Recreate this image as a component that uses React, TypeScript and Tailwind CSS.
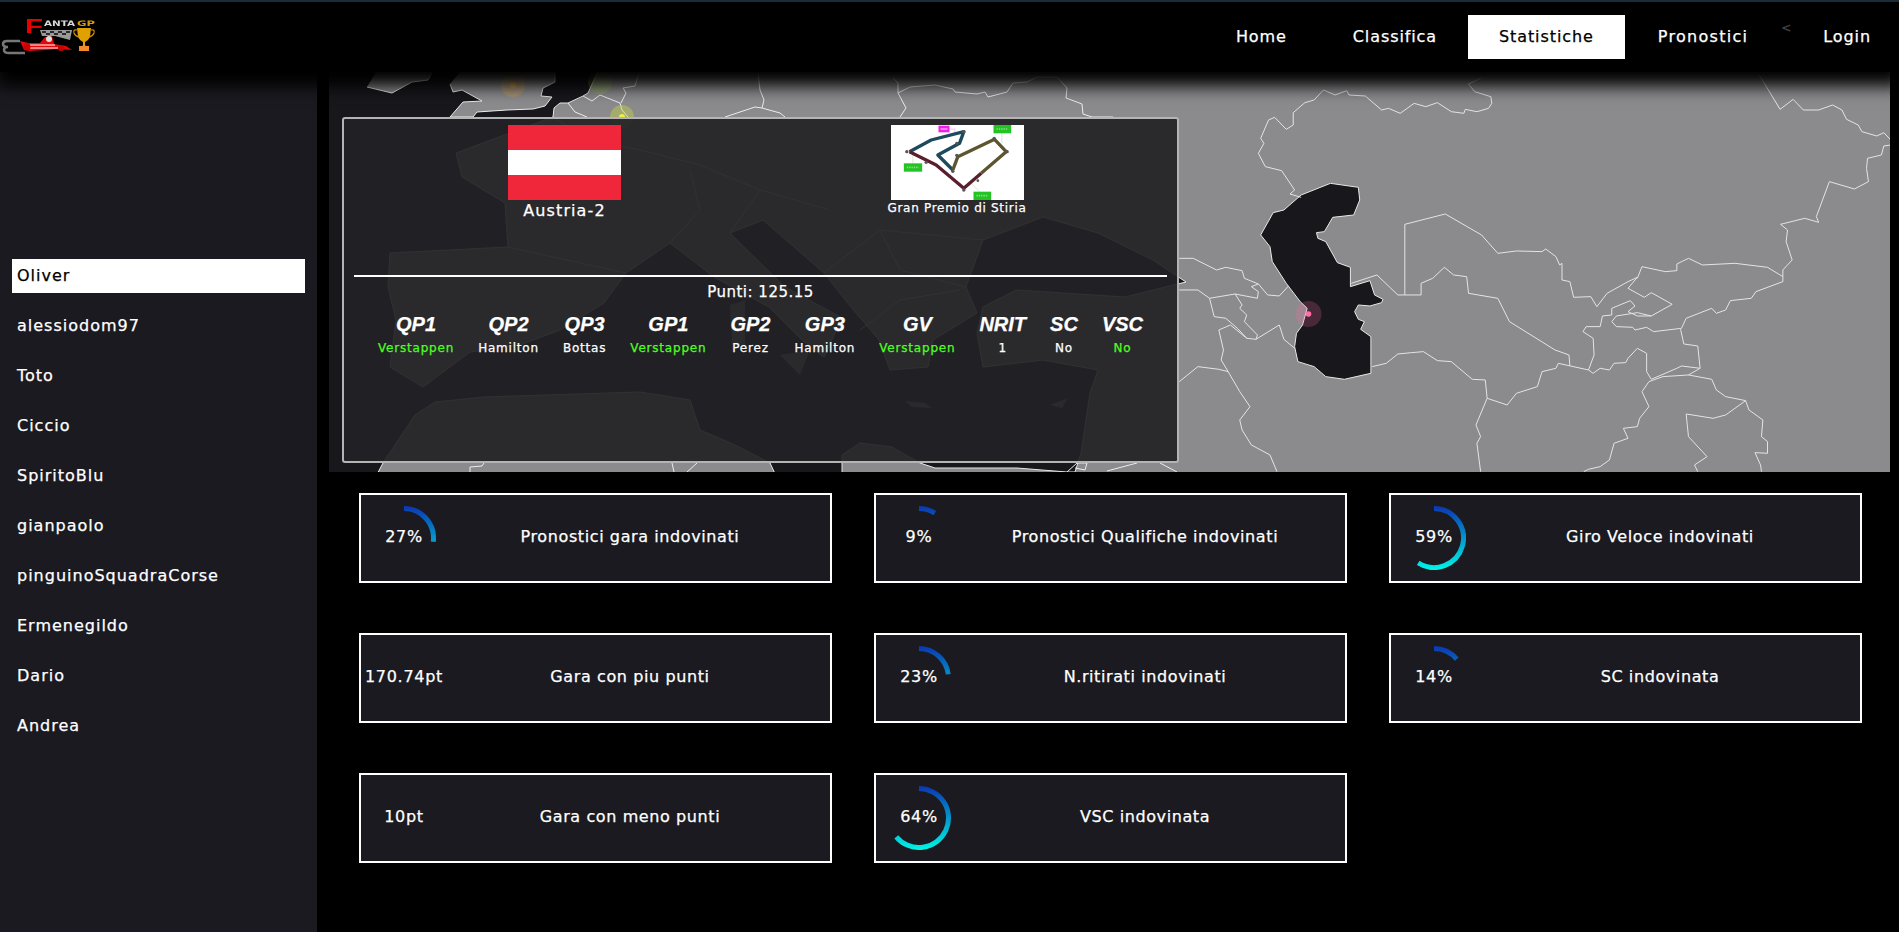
const FONT = "font-['DejaVu_Sans',sans-serif]";

const players = ["Oliver", "alessiodom97", "Toto", "Ciccio", "SpiritoBlu", "gianpaolo", "pinguinoSquadraCorse", "Ermenegildo", "Dario", "Andrea"];

const picks = [
  { t: "QP1", v: "Verstappen", ok: true },
  { t: "QP2", v: "Hamilton" },
  { t: "QP3", v: "Bottas" },
  { t: "GP1", v: "Verstappen", ok: true },
  { t: "GP2", v: "Perez" },
  { t: "GP3", v: "Hamilton" },
  { t: "GV", v: "Verstappen", ok: true },
  { t: "NRIT", v: "1" },
  { t: "SC", v: "No" },
  { t: "VSC", v: "No", ok: true },
];

const stats = [
  { value: "27%", pct: 27, label: "Pronostici gara indovinati" },
  { value: "9%", pct: 9, label: "Pronostici Qualifiche indovinati" },
  { value: "59%", pct: 59, label: "Giro Veloce indovinati" },
  { value: "170.74pt", label: "Gara con piu punti" },
  { value: "23%", pct: 23, label: "N.ritirati indovinati" },
  { value: "14%", pct: 14, label: "SC indovinata" },
  { value: "10pt", label: "Gara con meno punti" },
  { value: "64%", pct: 64, label: "VSC indovinata" },
];

// sea outline, in page coordinates (runs past the map edges so its stroke stays hidden)
const sea = "320,60 603,60 588,93 583,96 568,103 560,103 554,108 553,117 456,153 462,177 505,203 508,247 390,253 388,287 396,320 390,367 423,387 470,352 520,345 560,330 604,303 626,273 670,243 714,277 769,307 802,340 824,357 835,333 846,320 785,287 747,250 730,233 763,220 824,273 851,307 879,340 890,370 928,367 933,340 977,313 966,287 983,240 1043,217 1098,233 1153,260 1186,282 1125,297 1016,290 983,307 977,333 983,367 1043,360 1098,370 1090,393 1081,453 1075,472 1067,472 1017,468 935,468 920,463 892,447 860,443 842,455 842,480 778,480 770,463 735,445 700,430 690,400 640,392 484,397 435,402 415,415 383,463 374,480 320,480";

const caspian = "345,370 405,382 408,420 395,465 350,472 332,515 315,518 318,535 335,545 360,608 388,622 388,680 430,662 440,705 458,718 455,728 430,738 405,735 397,755 405,778 418,785 410,808 432,830 432,940 375,958 335,950 310,920 275,905 268,860 272,820 285,795 295,745 280,725 250,670 220,605 215,560 195,525 222,458 245,450 282,405";

// borders traced from the crop of central asia
const asiaBorders = [
  "642,72 668,55",
  "642,72 655,95 690,110 692,130 685,145 660,155 635,148 632,160 605,155 575,128 550,140 525,130 495,160 470,145 455,150 420,108 385,105 380,92 355,105 330,90 310,120 290,128 265,158 265,195 250,208 225,172 212,180 195,235 202,250 190,280 205,320 240,332 268,390 258,402 282,412",
  "1265,40 1312,148 1340,118 1362,150 1395,150 1425,135 1445,150 1455,178 1480,195 1488,215 1520,228 1535,218 1550,240",
  "1550,255 1535,258 1530,285 1500,295 1498,325 1502,365 1472,387 1418,365 1390,470 1395,487 1365,475 1313,493 1328,510 1325,545 1338,600 1318,630 1318,665",
  "1318,650 1285,622 1215,610 1145,615 1115,595 1090,612 1090,632 1065,635 1015,620 1005,655",
  "505,705 505,493 592,462 670,525 705,580 745,573 800,575 808,567 830,590 838,615 843,610 843,660 860,665 868,712 905,710 918,740 940,700 985,665 1005,652",
  "390,670 445,645 490,705 540,705",
  "540,705 540,670 565,655 590,622 610,645 638,650 642,700 705,715 730,785 828,870 858,885 860,918",
  "435,920 465,910 490,882 520,878 545,875 575,902 605,905 650,958 678,960 682,1015 725,1035 745,1000 790,980 800,935 830,925 835,910 900,930",
  "682,1015 658,1095 668,1130 660,1150 668,1235",
  "900,930 912,885 910,835 888,815 895,800 925,800 930,768 950,765 950,745 990,722 1000,738 985,755 1005,768 1035,768 1080,733 1035,698 1020,712 985,685 1005,652",
  "1035,768 1005,758 960,768 950,785 960,800 995,802 1000,810 1025,802 1040,815 1100,805 1110,775 1165,745 1175,760 1195,750 1205,722 1250,715 1260,695 1318,665",
  "1098,808 1105,852 1135,858 1140,925 1100,918 1090,925 1035,958 1025,935 1025,880 1005,865 985,895 980,908 955,910 945,930 925,925 910,940 900,930",
  "1140,925 1115,945 1060,950 1030,965 1015,995 1030,1040 1010,1075 1005,1100 975,1105 985,1135 955,1150 945,1200 925,1220 900,1228 890,1235",
  "1115,945 1165,958 1175,990 1195,1010 1238,1022 1245,1050 1275,1080 1272,1130 1285,1145 1285,1180 1258,1178 1270,1215 1272,1235",
  "1238,1022 1195,1065 1168,1075 1110,1062 1115,1130 1155,1190 1128,1215 1135,1235",
  "20,595 50,595 100,630 120,622 155,632 160,655 190,672 210,705 235,708 255,678",
  "20,690 60,690 85,715 140,702 188,715 190,695 175,680 190,672",
  "140,702 155,735 150,745 165,765 160,785 188,825 185,838 235,795 245,838 268,865",
  "85,715 95,770 120,775 145,805 165,835 185,838",
  "105,810 130,795 165,835",
  "105,810 115,870 110,900 125,935 150,995 172,1040 150,1080 155,1110 175,1155 215,1185 230,1235",
  "20,965 60,920 105,928 125,935",
];

// everything else is already in page coordinates
const pageBorders = [
  "367,87 392,93 412,82 428,80 432,73",
  "450,84 453,92 462,90 482,101 463,102 450,117 473,117 477,112 507,110 533,109 545,106 552,97 541,96 543,88 555,82 555,73",
  "568,103 575,112 587,117",
  "583,96 592,101 600,95 620,103 622,110 628,117",
  "621,103 626,93 623,88 635,86 639,73",
  "758,73 760,90 764,100 762,108 780,113 785,117",
  "725,117 755,107 762,108",
  "898,93 906,108 900,117",
  "898,93 898,83 893,78",
  "898,93 910,87 935,85 953,89 955,92 977,94 985,92 988,97 1007,92 1013,83 1027,82 1037,77 1057,77 1067,88 1066,98 1082,104 1083,114 1092,117 1113,117",
  "470,472 470,467 482,466 484,463",
  "672,463 674,472",
  "697,463 687,472",
  "1067,472 1077,463 1087,463 1085,470 1075,468",
  "1107,471 1137,463",
  "1160,463 1177,472",
  "508,247 626,273",
  "553,117 590,140 640,150 700,165 760,190 830,210",
  "670,243 700,210 690,170",
  "730,233 760,190",
  "860,330 900,300 960,290",
  "880,230 900,270 966,287",
  "824,273 880,230 983,240",
];

function Logo() {
  return (
    <svg viewBox="0 2 110 60" className="w-[110px] h-[60px] blur-[0.4px]">
      <text x="25" y="33" fontFamily="Liberation Sans, sans-serif" fontWeight="700" fontSize="21" fill="#e80000" textLength="18" lengthAdjust="spacingAndGlyphs">F</text>
      <text x="44" y="26" fontFamily="DejaVu Sans, sans-serif" fontWeight="700" fontSize="7.5" fill="#d8d8d8" textLength="31" lengthAdjust="spacingAndGlyphs">ANTA</text>
      <text x="77" y="26" fontFamily="DejaVu Sans, sans-serif" fontWeight="700" fontSize="7.5" fill="#d99a00" textLength="18" lengthAdjust="spacingAndGlyphs">GP</text>
      {/* chequered flag */}
      <path d="M40 30 L72 30 L70 40 L55 36 L42 36 Z" fill="#9a9a9a" />
      <path d="M42 31h4v2h-4zM50 31h4v2h-4zM58 31h4v2h-4zM66 31h4v2h-4zM46 33h4v2h-4zM54 33h4v2h-4zM62 33h4v2h-4z" fill="#2a2a2a" />
      {/* tyres */}
      <path d="M20 41 H7 Q3 41 3 44 Q3 47 8 47 M7 47 Q4 47 4 50 Q4 53 9 53 H25" fill="none" stroke="#777" strokeWidth="2.5" />
      {/* car */}
      <path d="M20 41 L28 43 L40 43 L45 37 L52 36 L54 44 L66 46 L72 50 L60 49 L30 51 L24 50 Z" fill="#e00808" />
      <path d="M30 45 H55 M30 48 H58" stroke="#fff" strokeWidth="1" />
      <circle cx="27" cy="47" r="3.5" fill="#c00" />
      <circle cx="61" cy="48" r="3" fill="#c00" />
      <circle cx="49" cy="39" r="3" fill="#ddd" />
      {/* trophy */}
      <path d="M77 28 H91 L90 37 Q88 41 85 42 L85 45 L88 50 H80 L83 45 L83 42 Q80 41 78 37 Z" fill="#e0a100" />
      <path d="M77 30 Q73 29 74 33 Q75 36 79 37 M91 30 Q95 29 94 33 Q93 36 89 37" fill="none" stroke="#c99000" strokeWidth="1.2" />
      <rect x="79" y="46" width="10" height="5" fill="#f08a2a" />
    </svg>
  );
}

function WorldMap() {
  return (
    <svg viewBox="329 72 1561 400" className="block w-full h-full">
      <rect x="329" y="72" width="1561" height="400" fill="#8b8b8d" />
      <polygon points={sea} fill="#17171c" stroke="#e8e8e8" strokeWidth="1" />
      <polygon points="367,87 392,93 412,82 428,80 432,72 376,72" fill="#8b8b8d" />
      <polygon points="450,84 453,92 462,90 482,101 463,102 450,117 473,117 477,112 507,110 533,109 545,106 552,97 541,96 543,88 555,82 555,72 460,72" fill="#8b8b8d" />
      {/* islands, almost hidden behind the panel */}
      <polygon points="905,401 925,403 932,408 912,407" fill="#8b8b8d" />
      <polygon points="1050,405 1068,398 1062,408" fill="#8b8b8d" />
      <polygon points="730,305 745,300 745,345 732,345" fill="#8b8b8d" />
      <polygon points="780,355 810,350 800,375" fill="#8b8b8d" />
      <g fill="none" stroke="#ececec" strokeWidth="1">
        {pageBorders.map((p) => (
          <polyline key={p} points={p} />
        ))}
      </g>
      <g transform="translate(1170 60) scale(0.465 0.3333)">
        <polygon points={caspian} fill="#17171c" stroke="#e8e8e8" strokeWidth="1" vectorEffect="non-scaling-stroke" />
        <g fill="none" stroke="#e4e4e4" strokeWidth="1">
          {asiaBorders.map((p) => (
            <polyline key={p} points={p} vectorEffect="non-scaling-stroke" />
          ))}
        </g>
      </g>
      <circle cx="513" cy="85" r="12" fill="#e0a040" opacity="0.3" />
      <circle cx="513" cy="85" r="3" fill="#e0a040" opacity="0.7" />
      <circle cx="600" cy="82" r="12" fill="#a0d040" opacity="0.25" />
      <circle cx="622" cy="117" r="12" fill="#ccdd44" opacity="0.4" />
      <circle cx="622" cy="117" r="3" fill="#e8f040" />
      <circle cx="1308.5" cy="314" r="13" fill="#ff6fa5" opacity="0.22" />
      <circle cx="1308.5" cy="314" r="2.8" fill="#ff6fa5" />
    </svg>
  );
}

function Circuit() {
  return (
    <svg viewBox="65 45 398 225" className="w-[133px] h-[75px] bg-white blur-[0.4px]">
      <g fill="none" stroke="#b9e6b9" strokeWidth="2">
        <path d="M130 160V128M397 70V100M330 245L300 215" />
      </g>
      <path d="M240 57H256V70" fill="none" stroke="#f3a0f3" strokeWidth="2" />
      <g fill="none" strokeWidth="10" strokeLinejoin="round">
        <path d="M120 125 L185 90 L283 65 L270 100 L205 135 L250 180" stroke="#1e4a5e" />
        <path d="M250 180 L265 140 L375 88 L410 125 L335 190" stroke="#5d5530" />
        <path d="M335 190 L283 235 L200 165 L120 125" stroke="#5a1f2e" />
      </g>
      <g fill="#555">
        <circle cx="112" cy="125" r="5" />
        <circle cx="283" cy="65" r="5" />
        <circle cx="262" cy="100" r="5" />
        <circle cx="262" cy="136" r="5" />
        <circle cx="250" cy="184" r="5" />
        <circle cx="374" cy="85" r="5" />
        <circle cx="413" cy="125" r="5" />
        <circle cx="283" cy="240" r="5" />
        <circle cx="170" cy="157" r="5" />
        <circle cx="325" cy="212" r="4" />
      </g>
      <g fill="#22c322">
        <rect x="103" y="160" width="55" height="25" />
        <rect x="372" y="45" width="53" height="25" />
        <rect x="312" y="245" width="53" height="25" />
      </g>
      <path d="M112 172H148M381 57H416M321 257H356" stroke="#8fdc8f" strokeWidth="5" strokeDasharray="4 3" />
      <rect x="207" y="47" width="33" height="20" fill="#f020e8" />
      <path d="M213 57H234" stroke="#f9a8f5" strokeWidth="4" />
    </svg>
  );
}

function Gauge({ pct, id }: { pct: number; id: string }) {
  const a = (pct / 100) * 2 * Math.PI;
  const r = 29.5;
  const x = 32 + r * Math.sin(a);
  const y = 32 - r * Math.cos(a);
  return (
    <svg viewBox="0 0 64 64" className="absolute top-[11px] left-[11px] w-[64px] h-[64px]">
      <defs>
        <linearGradient id={id} gradientUnits="userSpaceOnUse" x1="0" y1="0" x2="0" y2="64">
          <stop offset="0" stopColor="#0b36b0" />
          <stop offset="1" stopColor="#00f5e6" />
        </linearGradient>
      </defs>
      <path d={`M32 2.5 A${r} ${r} 0 ${pct > 50 ? 1 : 0} 1 ${x} ${y}`} fill="none" stroke={`url(#${id})`} strokeWidth="5" />
    </svg>
  );
}

export default function App() {
  return (
    <div className={`h-screen w-full overflow-hidden flex flex-col bg-black text-white [-webkit-text-stroke:0.25px] ${FONT}`}>
      <header className="relative z-10 h-[72px] flex-none bg-black shadow-[0_10px_16px_4px_#000]">
        <div className="h-[2px] bg-[#1b2b38]" />
        <div className="flex h-[70px] items-start justify-between">
          <Logo />
          <nav className="flex items-start pt-[13px] pr-[28px] text-[16px] leading-[44px] tracking-[0.9px]">
            <a className="px-[33px]">Home</a>
            <a className="pl-[33px] pr-[31px]">Classifica</a>
            <a className="px-[31px] bg-white text-black">Statistiche</a>
            <a className="px-[33px] tracking-[1.3px]">Pronostici</a>
            <span className="w-[9px] text-[12px] leading-[26px] text-[#444]">&lt;</span>
            <a className="pl-[33px]">Login</a>
          </nav>
        </div>
      </header>

      <div className="flex flex-1 min-h-0">
        <aside className="w-[317px] flex-none bg-[#1a1a20] pt-[187px] pl-[12px]">
          {players.map((p, i) => (
            <div
              key={p}
              className={`w-[293px] h-[34px] mb-[16px] pl-[5px] text-[16px] leading-[34px] tracking-[1px] ${i === 0 ? "bg-white text-black" : ""}`}
            >
              {p}
            </div>
          ))}
        </aside>

        <main className="flex-1 min-w-0 pl-[12px] pr-[9px]">
          <div className="relative h-[400px]">
            <WorldMap />

            <section className="absolute left-[13px] top-[45px] w-[837px] h-[346px] rounded-[3px] border-2 border-[#b4b4b4] bg-[rgba(34,34,38,0.93)]">
              <div className="flex h-[156px] pt-[6px]">
                <div className="w-[441px] flex flex-col items-center">
                  <div className="w-[113px] h-[75px] flex flex-col">
                    <div className="flex-1 bg-[#f0273a]" />
                    <div className="flex-1 bg-white" />
                    <div className="flex-1 bg-[#f0273a]" />
                  </div>
                  <div className="mt-[1px] text-[16px] leading-[20px] tracking-[1.1px]">Austria-2</div>
                </div>
                <div className="w-[344px] flex flex-col items-center">
                  <Circuit />
                  <div className="text-[12px] leading-[16px] tracking-[0.7px]">Gran Premio di Stiria</div>
                </div>
              </div>
              <div className="mx-[10px] h-[2px] bg-white" />
              <div className="mt-[5px] text-center text-[15px] leading-[20px] tracking-[0.5px]">Punti: 125.15</div>
              <div className="mt-[11px] flex justify-center gap-6">
                {picks.map((p) => (
                  <div key={p.t + p.v} className="flex flex-col items-center">
                    <div className="font-['Liberation_Sans',sans-serif] text-[20px] leading-[23px] font-bold italic">{p.t}</div>
                    <div className={`mt-[4px] text-[12px] leading-[16px] tracking-[0.8px] ${p.ok ? "text-[#4dff20]" : ""}`}>{p.v}</div>
                  </div>
                ))}
              </div>
            </section>
          </div>

          <div className="grid grid-cols-[473px_473px_473px] auto-rows-[90px] gap-x-[42px] gap-y-[50px] pt-[21px] pl-[30px]">
            {stats.map((s, i) => (
              <div key={s.label} className="relative flex items-center pb-[2px] border-2 border-white bg-[#1a1a20]">
                {s.pct !== undefined && <Gauge pct={s.pct} id={`ring${i}`} />}
                <div className="relative w-[86px] flex-none text-center text-[16px] tracking-[0.7px] whitespace-nowrap">{s.value}</div>
                <div className="flex-1 pr-[17px] text-center text-[16px] tracking-[0.6px]">{s.label}</div>
              </div>
            ))}
          </div>
        </main>
      </div>
    </div>
  );
}
